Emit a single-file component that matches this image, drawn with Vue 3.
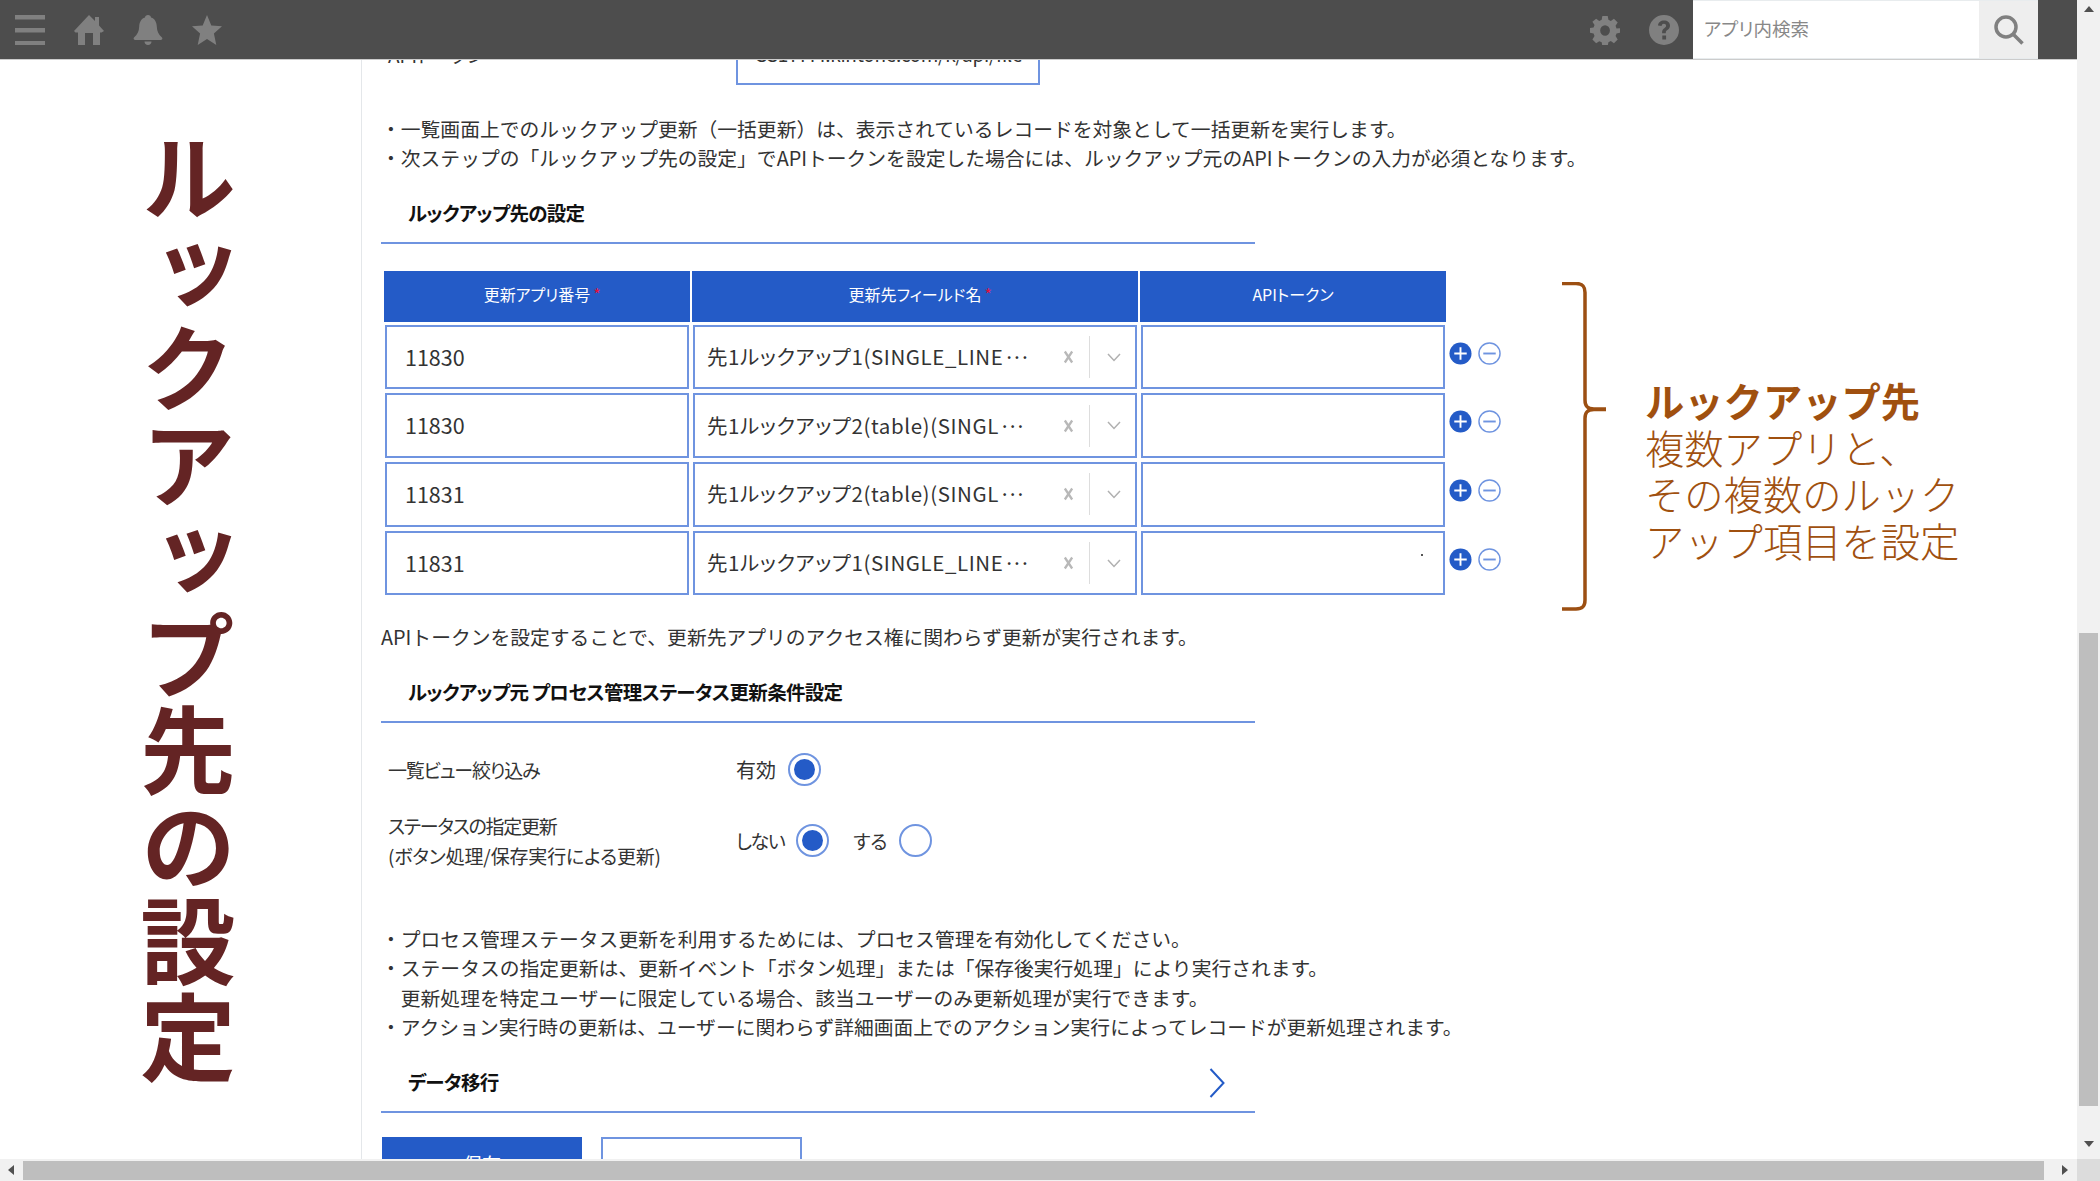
<script setup>
const rows = [
  { app: '11830', field: '先1ルックアップ1(SINGLE_LINE' },
  { app: '11830', field: '先1ルックアップ2(table)(SINGL' },
  { app: '11831', field: '先1ルックアップ2(table)(SINGL' },
  { app: '11831', field: '先1ルックアップ1(SINGLE_LINE', dot: true },
]
</script>

<template>
  <div class="screen">
    <div class="main">
      <header class="topbar">
        <div class="tools">
          <svg class="ico" viewBox="0 0 30 30"><path d="M0 0h30v4.500H0zM0 13h30v4.500H0zM0 26h30v4H0z" /></svg>
          <svg class="ico" viewBox="0 0 30 30"><path d="M15 0l6 6V2h4v8.500l5 5.500-2.500 1.500H26V30h-7V18h-8v12H4V17.500H1.500L0 16z" /></svg>
          <svg class="ico" viewBox="0 0 30 30"><path d="M15 0c1.700 0 3 1.200 3 2.600 4 1.300 5.600 4.800 5.800 9 .2 5 1.800 8.200 5.200 11 .7.600.5 2.400-1 2.400H2c-1.500 0-1.700-1.800-1-2.400 3.400-2.800 5-6 5.200-11 .2-4.200 1.800-7.700 5.800-9C12 1.200 13.300 0 15 0zM11.500 26.500h7c0 2-1.500 3.500-3.500 3.500s-3.500-1.500-3.500-3.500z" /></svg>
          <svg class="ico" viewBox="0 0 30 30"><path d="M15 0l4.300 10.400L30 11.300l-8.100 7.200L24.300 30 15 23.900 5.700 30l2.400-11.500L0 11.300l10.700-.9z" /></svg>
        </div>
        <div class="tools right">
          <svg class="ico" viewBox="0 0 30 30"><path fill-rule="evenodd" d="M12 0h6l.8 4.200 2.700 1.100L25 2.900l4.200 4.200-2.400 3.500 1.100 2.700L32 13.200v0V18l-4.100.8-1.100 2.700 2.400 3.500-4.200 4.200-3.500-2.400-2.700 1.100L18 32h-6l-.8-3.900-2.700-1.100L5 29.200.8 25l2.400-3.500-1.100-2.700L-2 18v-5l4.100-.7 1.100-2.700L.8 6.100 5 2.900l3.500 2.400 2.700-1.100zM15 10a5.500 5.500 0 100 11 5.500 5.500 0 000-11z" transform="translate(1.700 .9) scale(.89 .94)" /></svg>
          <svg class="ico" viewBox="0 0 30 30"><path fill-rule="evenodd" d="M15 0a15 15 0 110 30 15 15 0 010-30zM15 5.500c-3.400 0-5.800 2-6 5l3.600.5c.2-1.400 1-2.300 2.300-2.300 1.300 0 2.200.8 2.200 2 0 1-.6 1.600-1.800 2.500-1.500 1.100-2.200 2.100-2.200 4.200v.8h3.700v-.6c0-1.100.4-1.600 1.600-2.500 1.500-1.100 2.600-2.400 2.600-4.500 0-3.100-2.500-5.100-6-5.100zM13.300 20.500v3.900h3.800v-3.900z" /></svg>
        </div>
        <div class="search">
          <div class="search-input">アプリ内検索</div>
          <div class="search-btn">
            <svg class="search-ico" viewBox="0 0 30 30"><circle cx="12" cy="12" r="10" /><path d="M19 19l9.500 9.500" /></svg>
          </div>
        </div>
      </header>

      <div class="page">
        <aside class="side">
          <h1 class="side-title">ルックアップ先の設定</h1>
        </aside>

        <main class="content">
          <div class="api-row">
            <span class="api-label">APIトークン</span>
            <div class="api-box">SS1YYYY.kintone.com/k/api/file</div>
          </div>

          <p class="notes first">
            ・一覧画面上でのルックアップ更新（一括更新）は、表示されているレコードを対象として一括更新を実行します。<br />
            ・次ステップの「ルックアップ先の設定」でAPIトークンを設定した場合には、ルックアップ元のAPIトークンの入力が必須となります。
          </p>

          <h2 class="heading">ルックアップ先の設定</h2>

          <div class="table-row">
            <div class="table">
              <div class="th">更新アプリ番号<i>*</i></div>
              <div class="th">更新先フィールド名<i>*</i></div>
              <div class="th">APIトークン</div>
              <div></div>
              <template v-for="(r, i) in rows" :key="i">
                <div class="cell"><div class="field app">{{ r.app }}</div></div>
                <div class="cell">
                  <div class="field select">
                    <span class="sel-text">{{ r.field }}<span class="dots">···</span></span>
                    <svg class="x" viewBox="0 0 12 14"><path d="M2 1l8 12M10 1L2 13" /></svg>
                    <span class="sep"></span>
                    <svg class="chev" viewBox="0 0 14 9"><path d="M1 1l6 6.500L13 1" /></svg>
                  </div>
                </div>
                <div class="cell"><div class="field token"><span v-if="r.dot" class="dot"></span></div></div>
                <div class="ops">
                  <svg class="op" viewBox="0 0 24 24"><circle cx="12" cy="12" r="11.500" fill="#245bc7" /><path d="M12 5.500v13M5.500 12h13" stroke="#fff" stroke-width="2" /></svg>
                  <svg class="op" viewBox="0 0 24 24"><circle cx="12" cy="12" r="11" fill="#fff" stroke="#6f94e0" stroke-width="1.500" /><path d="M5.500 12h13" stroke="#6f94e0" stroke-width="2" /></svg>
                </div>
              </template>
            </div>

            <div class="callout">
              <svg class="brace" viewBox="0 0 44 329"><path d="M0 1.500h14c7 0 9 3 9 9V118c0 6 2 9 9 9h12M44 127.500H32c-7 0-9 3-9 9V318c0 6-2 9-9 9H0" /></svg>
              <div class="callout-text">
                <b>ルックアップ先</b><br />
                複数アプリと、<br />
                その複数のルック<br />
                アップ項目を設定
              </div>
            </div>
          </div>

          <p class="notes helper">APIトークンを設定することで、更新先アプリのアクセス権に関わらず更新が実行されます。</p>

          <h2 class="heading">ルックアップ元 プロセス管理ステータス更新条件設定</h2>

          <div class="form-row one">
            <div class="label"><span class="tight">一覧ビュー絞り込み</span></div>
            <div class="choices">
              <span class="opt-wide">有効</span><span class="radio on gap-a"></span>
            </div>
          </div>
          <div class="form-row two">
            <div class="label"><span class="tight">ステータスの指定更新</span><br />(ボタン処理/保存実行による更新)</div>
            <div class="choices">
              <span class="opt-tight">しない</span><span class="radio on gap-b"></span>
              <span class="second-choice">する</span><span class="radio gap-c"></span>
            </div>
          </div>

          <p class="notes last">
            ・プロセス管理ステータス更新を利用するためには、プロセス管理を有効化してください。<br />
            ・ステータスの指定更新は、更新イベント「ボタン処理」または「保存後実行処理」により実行されます。<br />
            　更新処理を特定ユーザーに限定している場合、該当ユーザーのみ更新処理が実行できます。<br />
            ・アクション実行時の更新は、ユーザーに関わらず詳細画面上でのアクション実行によってレコードが更新処理されます。
          </p>

          <div class="heading third">
            <span>データ移行</span>
            <svg class="more" viewBox="0 0 16 30"><path d="M1.500 1l13 14-13 14" /></svg>
          </div>

          <div class="buttons">
            <button class="btn primary">保存</button>
            <button class="btn ghost"></button>
          </div>
        </main>
      </div>
    </div>

    <div class="vbar">
      <span class="arrow up"></span>
      <div class="vthumb"></div>
      <span class="arrow down"></span>
    </div>
    <div class="hbar">
      <span class="arrow left"></span>
      <div class="hthumb"></div>
      <span class="arrow right"></span>
    </div>
    <div class="corner"></div>
  </div>
</template>

<style>
html, body { margin: 0; overflow: hidden; background: #fff; }
</style>

<style scoped>
.screen {
  width: 2100px;
  height: 1181px;
  display: grid;
  grid-template-columns: 2077px 23px;
  grid-template-rows: 1159px 22px;
  font-family: "Noto Sans CJK JP", "Noto Sans", sans-serif;
  font-feature-settings: "palt";
  color: #333;
  overflow: hidden;
}
.main { position: relative; overflow: hidden; background: #fff; }

.topbar {
  position: relative;
  z-index: 2;
  height: 59px;
  background: #4d4d4d;
  border-bottom: 1px solid #ccc;
  box-sizing: content-box;
  display: flex;
  align-items: center;
  padding-left: 15px;
  padding-right: 39px;
}
.tools { display: flex; gap: 29px; }
.tools.right { margin-left: auto; gap: 29px; margin-right: 14px; }
.ico { width: 30px; height: 30px; fill: #808080; display: block; overflow: hidden; }
.search { display: flex; height: 59px; box-sizing: border-box; border-top: 1px solid #e8ecee; border-bottom: 1px solid #e8ecee; }
.search-input {
  width: 286px;
  box-sizing: border-box;
  background: #fff;
  color: #888;
  font-size: 18.500px;
  line-height: 54px;
  padding-left: 11px;
}
.search-btn { width: 59px; background: #eee; display: flex; align-items: center; justify-content: center; }
.search-ico { width: 30px; height: 30px; fill: none; stroke: #808080; stroke-width: 3.500; }

.page { display: flex; margin-top: -60px; min-height: 1159px; }
.side {
  width: 361px;
  flex: none;
  border-right: 1px solid #e4e7ea;
  display: flex;
  justify-content: center;
  box-sizing: content-box;
}
.side-title {
  margin: 130px 0 0;
  writing-mode: vertical-rl;
  text-orientation: upright;
  font-size: 95.500px;
  line-height: 100px;
  font-weight: 700;
  color: #642424;
  font-feature-settings: normal;
  transform: translateX(7px);
}
.content { flex: 1; padding-left: 19px; min-width: 0; }

.api-row { display: flex; align-items: flex-end; height: 85px; padding-left: 7px; }
.api-label { width: 348px; font-size: 19px; line-height: 29px; margin-bottom: 16px; }
.api-box {
  width: 304px;
  height: 65px;
  box-sizing: border-box;
  border: 2px solid #6f94e0;
  font-size: 19px;
  line-height: 25px;
  letter-spacing: -.3px;
  padding: 19px 0 0 18px;
  white-space: nowrap;
  overflow: hidden;
}

.notes {
  margin: 0;
  font-size: 19.800px;
  line-height: 29.400px;
  white-space: nowrap;
  font-feature-settings: normal;
}
.notes.first { margin-top: 29px; }
.notes.helper { margin-top: 25.600px; }
.notes.last { margin-top: 53px; }

.heading {
  width: 874px;
  box-sizing: border-box;
  margin: 0;
  padding: 26px 0 15px 27px;
  border-bottom: 2px solid #6f94e0;
  font-size: 19.500px;
  line-height: 28px;
  font-weight: 700;
  letter-spacing: -.7px;
  color: #111;
}
.heading.third { display: flex; align-items: center; justify-content: space-between; padding-right: 30px; padding-top: 27px; padding-bottom: 15px; }
.more { width: 16px; height: 30px; fill: none; stroke: #245bc7; stroke-width: 2; display: block; margin: 0 0 -2px; }

.table-row { display: flex; margin-top: 27px; margin-left: 3px; }
.table {
  display: grid;
  grid-template-columns: 306px 446px 306px 58px;
  column-gap: 2px;
  grid-template-rows: 51px repeat(4, 68.670px);
}
.th {
  background: #245bc7;
  color: #fff;
  font-size: 16px;
  display: flex;
  align-items: center;
  justify-content: center;
  padding-bottom: 4px;
  box-sizing: border-box;
}
.th i { color: #e3103c; font-style: normal; width: 0; margin-left: 3px; margin-right: -3px; }
.cell { padding: 3px 1px 1px; min-width: 0; }
.field {
  height: 100%;
  box-sizing: border-box;
  border: 2px solid #6f94e0;
  background: #fff;
  font-size: 20.500px;
  display: flex;
  align-items: center;
  position: relative;
}
.app { padding-left: 18px; font-size: 21.500px; padding-bottom: 2px; }
.select { padding-left: 12px; font-size: 20.500px; }
.sel-text { flex: 1; white-space: nowrap; overflow: hidden; padding-bottom: 2px; letter-spacing: .6px; }
.dots { letter-spacing: -3.600px; }
.x { width: 11px; height: 14px; fill: none; stroke: #b8b8b8; stroke-width: 2.500; margin-right: 15px; flex: none; }
.sep { width: 1px; height: 42px; background: #ddd; flex: none; margin-right: 17px; }
.chev { width: 14px; height: 9px; fill: none; stroke: #b0b0b0; stroke-width: 1.500; margin-right: 14px; flex: none; }
.dot { position: absolute; right: 20px; top: 21px; width: 2px; height: 2px; background: #555; }
.ops { display: flex; align-items: center; gap: 6px; padding-left: 1px; margin-top: -6px; }
.op { width: 23px; height: 23px; flex: none; display: block; }

.callout { display: flex; align-items: flex-start; margin: 11px 0 -14px 56px; color: #a0500f; }
.brace { width: 44px; height: 329px; fill: none; stroke: #9c4f12; stroke-width: 3.500; display: block; }
.callout-text {
  margin: 95px 0 0 39px;
  font-size: 39.300px;
  line-height: 46.700px;
  font-weight: 300;
  font-feature-settings: normal;
  white-space: nowrap;
}
.callout-text b { font-weight: 700; }

.form-row { display: flex; align-items: center; padding-left: 7px; font-size: 19px; }
.form-row.one { height: 40px; margin-top: 27px; }
.form-row.two { height: 60px; margin-top: 21px; }
.label { width: 348px; line-height: 29.400px; white-space: nowrap; letter-spacing: -.15px; }
.tight { letter-spacing: -1.250px; }
.choices { display: flex; align-items: center; }
.opt-wide { font-size: 20px; font-feature-settings: normal; }
.opt-tight { letter-spacing: -1.500px; }
.radio {
  width: 33px;
  height: 33px;
  box-sizing: border-box;
  border: 2px solid #6f94e0;
  border-radius: 50%;
  background: #fff;
  position: relative;
}
.gap-a { margin-left: 12px; }
.gap-b { margin-left: 12px; }
.gap-c { margin-left: 12px; }
.radio.on::after {
  content: "";
  position: absolute;
  inset: 4px;
  border-radius: 50%;
  background: #245bc7;
}
.second-choice { margin-left: 24px; }

.buttons { display: flex; gap: 19px; margin-top: 24px; margin-left: 1px; }
.btn {
  height: 60px;
  box-sizing: border-box;
  font: inherit;
  font-size: 19px;
  padding: 0 0 8px;
}
.btn.primary { width: 200px; background: #245bc7; border: 1px solid #245bc7; color: #fff; }
.btn.ghost { width: 201px; background: #fff; border: 2px solid #6f94e0; color: #333; }

.vbar {
  background: #f1f1f1;
  position: relative;
  display: flex;
  flex-direction: column;
  align-items: center;
  padding-top: 633px;
  box-sizing: border-box;
}
.vthumb { width: 19px; height: 473px; background: #bebebe; }
.hbar { position: relative; background: #f1f1f1; display: flex; align-items: center; padding-left: 23px; box-sizing: border-box; }
.hthumb { width: 2021px; height: 19px; background: #bebebe; }
.corner { background: #dcdcdc; }
.arrow { position: absolute; width: 0; height: 0; border: 5px solid transparent; }
.arrow.up { top: 6px; border-bottom: 6px solid #505050; border-top: 0; }
.arrow.down { top: 1141px; border-top: 6px solid #505050; border-bottom: 0; }
.arrow.left { left: 8px; border-right: 6px solid #505050; border-left: 0; }
.arrow.right { left: 2062px; border-left: 6px solid #505050; border-right: 0; }
</style>
